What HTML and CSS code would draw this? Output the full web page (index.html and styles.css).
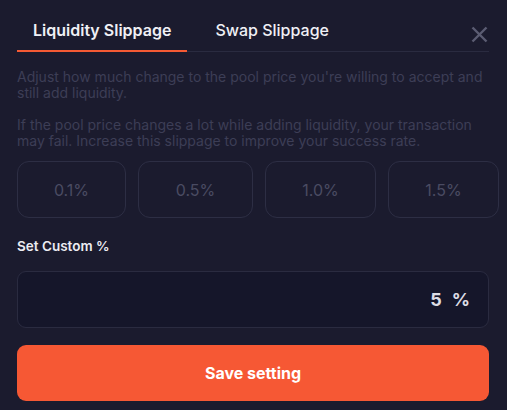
FILE: index.html
```html
<!DOCTYPE html>
<html>
<head>
<meta charset="utf-8">
<link rel="stylesheet" href="styles.css">
</head>
<body>
<div class="panel">
  <div class="tabs">
    <div class="tab active">Liquidity Slippage</div>
    <div class="tab">Swap Slippage</div>
    <svg class="close" width="17" height="17" viewBox="0 0 17 17"><path d="M1.5 1.5 L15.5 15.5 M15.5 1.5 L1.5 15.5" stroke="#5b5c72" stroke-width="2.4" stroke-linecap="butt"/></svg>
  </div>
  <p class="desc">Adjust how much change to the pool price you're willing to accept and still add liquidity.</p>
  <p class="desc">If the pool price changes a lot while adding liquidity, your transaction may fail. Increase this slippage to improve your success rate.</p>
  <div class="options">
    <div class="opt">0.1%</div>
    <div class="opt">0.5%</div>
    <div class="opt">1.0%</div>
    <div class="opt">1.5%</div>
  </div>
  <div class="label">Set Custom %</div>
  <div class="input"><span class="val">5</span><span class="pct">%</span></div>
  <div class="save">Save setting</div>
</div>
</body>
</html>
```
FILE: styles.css
```css
html, body {
  margin: 0;
  padding: 0;
  background: #1b1b2e;
  font-family: Inter, "Noto Sans", sans-serif;
}
.panel {
  padding: 0 18px 0 17px;
}
.tabs {
  display: flex;
  align-items: flex-end;
  height: 51px;
  border-bottom: 1px solid #2a2b40;
}
.tab {
  padding: 0 16px 10px;
  line-height: 20px;
  font-size: 16px;
  font-weight: 500;
  color: #f0f0f5;
  border-bottom: 2px solid transparent;
  margin-bottom: -1px;
}
.tab.active {
  font-weight: 600;
  border-bottom-color: #f55a34;
}
.tab + .tab {
  margin-left: 12px;
}
.close {
  margin-left: auto;
  margin-right: 1px;
  margin-bottom: 8px;
}
.desc {
  margin: 17px 0 0;
  font-size: 14px;
  line-height: 16px;
  color: #3d3e56;
}
.desc + .desc {
  margin-top: 16px;
}
.options {
  display: grid;
  grid-template-columns: 109px 115px 111px 111px;
  gap: 12px;
  margin-top: 12px;
}
.opt {
  height: 57px;
  box-sizing: border-box;
  border: 1px solid #2d2e44;
  border-radius: 12px;
  display: flex;
  align-items: center;
  justify-content: center;
  font-size: 16px;
  color: #4a4b62;
}
.label {
  margin-top: 18px;
  line-height: 20px;
  font-size: 13.5px;
  font-weight: 600;
  color: #ececf2;
}
.input {
  margin-top: 15px;
  height: 57px;
  box-sizing: border-box;
  border: 1px solid #2a2b40;
  border-radius: 9px;
  background: #15162a;
  display: flex;
  align-items: center;
  justify-content: flex-end;
  padding-right: 18px;
  font-size: 18px;
  font-weight: 700;
  color: #dcdce4;
}
.pct {
  margin-left: 10px;
}
.save {
  margin-top: 17px;
  height: 56px;
  border-radius: 9px;
  background: #f65834;
  display: flex;
  align-items: center;
  justify-content: center;
  font-size: 16px;
  font-weight: 700;
  color: #ffffff;
}
```
